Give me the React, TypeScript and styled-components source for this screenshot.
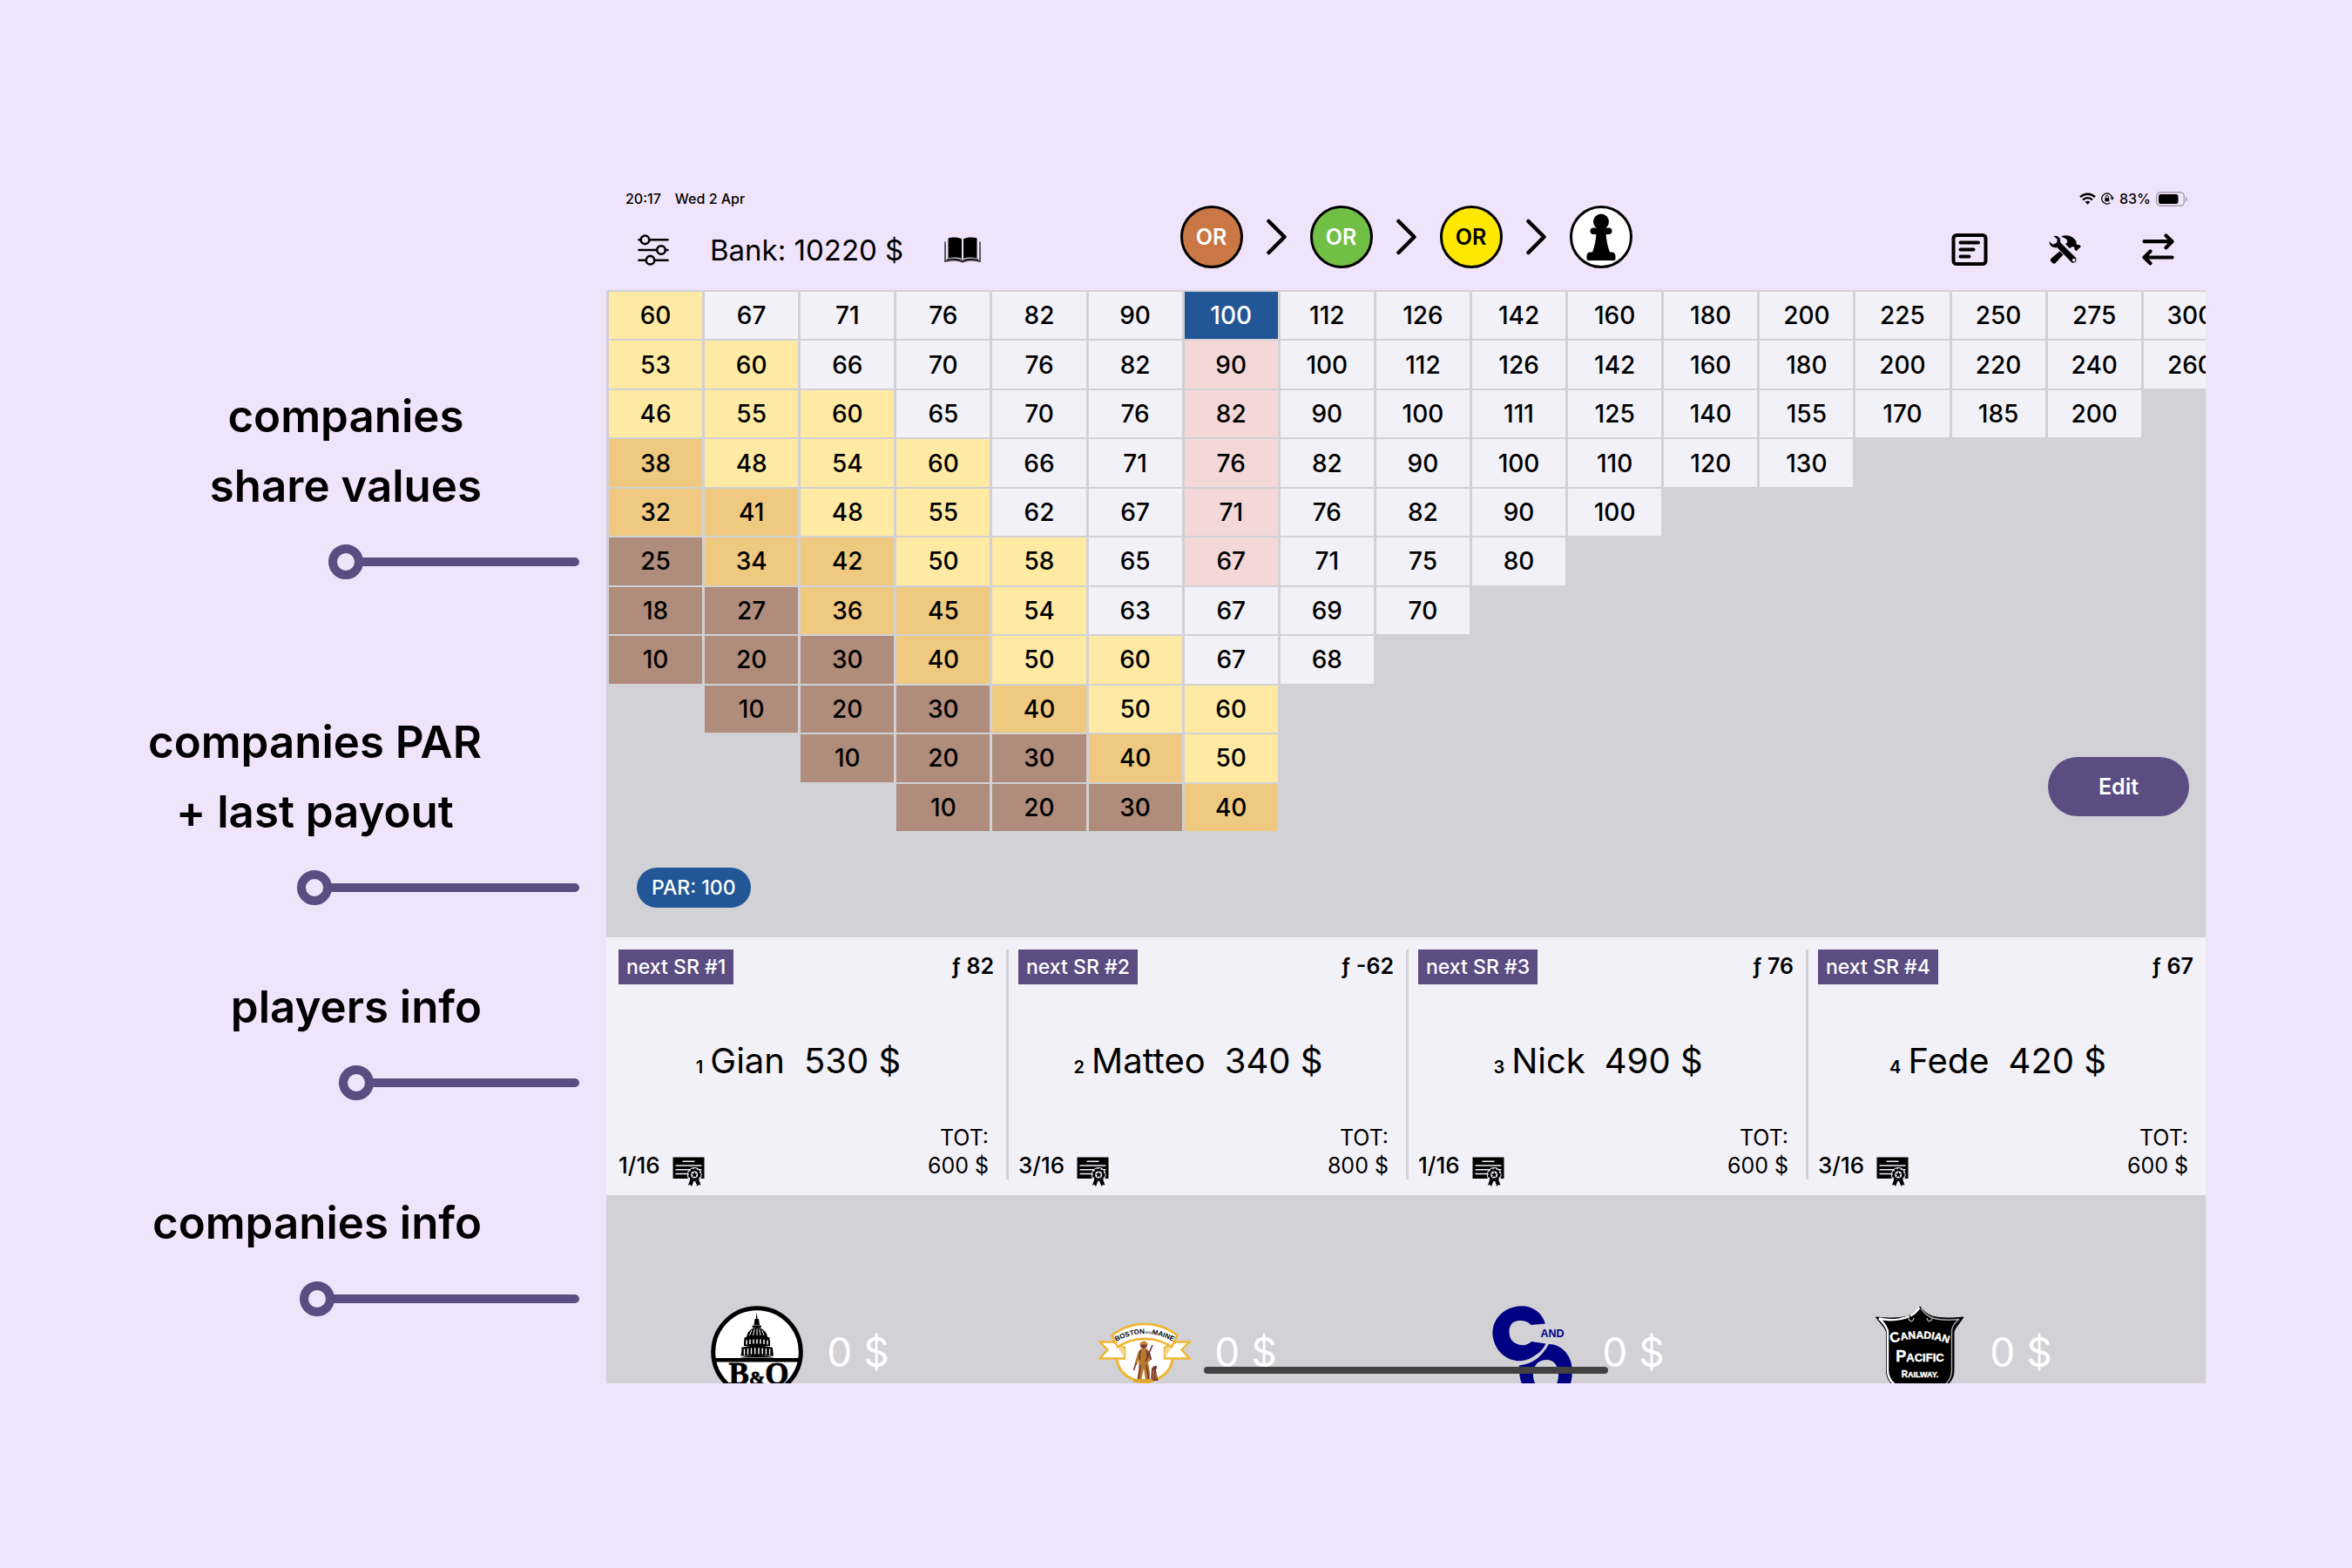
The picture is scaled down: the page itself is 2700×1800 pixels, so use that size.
import React from "react";
import styled, { createGlobalStyle } from "styled-components";

const color = {
  page: "#f0e4fb",
  board: "#d1d1d6",
  surface: "#f2f1f7",
  accent: "#5b4d82",
  par: "#225696",
  ink: "#000000",
};

const zoneFill = {
  w: color.surface,
  y: "#ffeaa4",
  o: "#eec97f",
  b: "#af8c7b",
  p: "#f4d8d8",
  s: color.par,
};

type Zone = keyof typeof zoneFill;

const GlobalStyle = createGlobalStyle`
  *, *::before, *::after { box-sizing: border-box; }
  body {
    margin: 0;
    background: ${color.page};
    color: ${color.ink};
    font-family: Inter, "Liberation Sans", sans-serif;
  }
  svg { display: block; flex: none; }
`;

const Poster = styled.main`
  display: grid;
  grid-template-columns: 665px minmax(0, 1fr);
  column-gap: 31px;
  height: 100vh;
  padding: 211px 168px 212px 0;
`;

/* ---------- annotations ---------- */

const Notes = styled.aside`
  display: flex;
  flex-direction: column;
  align-items: flex-end;
  padding-top: 227px;
`;

const Note = styled.div<{ $gap: number }>`
  display: flex;
  flex-direction: column;
  margin-bottom: ${(p) => p.$gap}px;
`;

const NoteText = styled.h2`
  margin: 0 112px 27px 0;
  font-size: 51px;
  line-height: 80px;
  font-weight: 600;
  text-align: center;
  white-space: pre-line;
`;

const Connector = styled.div`
  display: flex;
  align-items: center;
  margin-left: calc(50% - 76px);
`;

const Ring = styled.span`
  width: 40px;
  height: 40px;
  border: 10px solid ${color.accent};
  border-radius: 50%;
`;

const Line = styled.span`
  flex: 1;
  height: 10px;
  margin-left: -2px;
  border-radius: 0 5px 5px 0;
  background: ${color.accent};
`;

/* ---------- tablet screen ---------- */

const Screen = styled.section`
  position: relative;
  display: flex;
  flex-direction: column;
  min-width: 0;
  overflow: hidden;
`;

const Header = styled.header`
  display: grid;
  flex: none;
  grid-template-columns: 1fr auto 1fr;
  grid-template-rows: 29px 93px;
  align-items: center;
`;

const Status = styled.div<{ $end?: boolean }>`
  grid-row: 1;
  grid-column: ${(p) => (p.$end ? 3 : 1)};
  display: flex;
  align-items: center;
  justify-content: ${(p) => (p.$end ? "flex-end" : "flex-start")};
  gap: ${(p) => (p.$end ? 6 : 16)}px;
  padding: ${(p) => (p.$end ? "5px 20px 0 0" : "5px 0 0 22px")};
  font-size: 16px;
  line-height: 20px;
  font-weight: 500;
`;

const Tools = styled.div<{ $end?: boolean }>`
  grid-row: 2;
  grid-column: ${(p) => (p.$end ? 3 : 1)};
  display: flex;
  align-items: center;
  justify-content: ${(p) => (p.$end ? "flex-end" : "flex-start")};
  gap: ${(p) => (p.$end ? 70 : 47)}px;
  padding: ${(p) => (p.$end ? "0 36px 0 0" : "0 0 0 36px")};
`;

const IconButton = styled.button`
  display: flex;
  padding: 0;
  border: 0;
  background: none;
  color: inherit;
  cursor: pointer;
`;

const Bank = styled.span`
  font-size: 33px;
  line-height: 40px;
`;

const Rounds = styled.ol`
  grid-row: 1 / 3;
  grid-column: 2;
  display: flex;
  align-items: center;
  gap: 27px;
  margin: 0;
  padding: 0;
  list-style: none;
`;

const Round = styled.li`
  display: flex;
  align-items: center;
  gap: 27px;
`;

const Token = styled.span<{ $fill: string; $ink: string }>`
  display: flex;
  align-items: center;
  justify-content: center;
  width: 72px;
  height: 72px;
  border: 3px solid ${color.ink};
  border-radius: 50%;
  background: ${(p) => p.$fill};
  color: ${(p) => p.$ink};
  font-size: 25px;
  font-weight: 600;
`;

/* ---------- share value board ---------- */

const Board = styled.div`
  position: relative;
  flex: none;
  padding-bottom: 34px;
  background: ${color.board};
  overflow: hidden;
`;

const Market = styled.table`
  width: 1875px;
  height: 623px;
  table-layout: fixed;
  border-spacing: 3px 2px;
`;

const Value = styled.td<{ $zone: Zone }>`
  padding: 0;
  background: ${(p) => zoneFill[p.$zone]};
  color: ${(p) => (p.$zone === "s" ? "#ffffff" : color.ink)};
  font-size: 28px;
  line-height: 34px;
  font-weight: 500;
  text-align: center;
`;

const Blank = styled.td`
  padding: 0;
`;

const ParRow = styled.div`
  display: flex;
  padding: 40px 35px 0;
`;

const ParPill = styled.span`
  padding: 8px 17px;
  border-radius: 23px;
  background: ${color.par};
  color: #ffffff;
  font-size: 23px;
  line-height: 30px;
  font-weight: 500;
`;

const EditButton = styled.button`
  position: absolute;
  right: 19px;
  bottom: 139px;
  width: 162px;
  height: 68px;
  border: 0;
  border-radius: 34px;
  background: ${color.accent};
  color: #ffffff;
  font: 600 25px/30px Inter, "Liberation Sans", sans-serif;
  cursor: pointer;
`;

/* ---------- players ---------- */

const Players = styled.div`
  display: flex;
  flex: none;
  gap: 11px;
  padding: 14px 0 18px 14px;
  background: ${color.surface};
`;

const Player = styled.article`
  display: flex;
  flex: 1;
  flex-direction: column;
  justify-content: space-between;
  height: 264px;
  padding-right: 14px;
  border-right: 3px solid ${color.board};

  &:last-child {
    border-right: 0;
  }
`;

const PlayerRow = styled.div`
  display: flex;
  align-items: flex-start;
  justify-content: space-between;
`;

const Tag = styled.span`
  padding: 5px 9px;
  background: ${color.accent};
  color: #ffffff;
  font-size: 23px;
  line-height: 30px;
  font-weight: 500;
`;

const Flow = styled.span`
  padding-top: 4px;
  font-size: 25px;
  line-height: 30px;
  font-weight: 600;
`;

const Person = styled.div`
  display: flex;
  align-items: baseline;
  justify-content: center;
  padding: 22px 18px 0 0;
  font-size: 40px;
  line-height: 48px;
`;

const Seat = styled.span`
  margin-right: 8px;
  font-size: 20px;
  font-weight: 600;
`;

const Cash = styled.span`
  margin-left: 22px;
`;

const Certs = styled.span`
  display: flex;
  align-self: flex-end;
  align-items: center;
  gap: 14px;
  height: 32px;
  font-size: 26px;
  line-height: 32px;
  font-weight: 500;

  svg {
    margin-bottom: -14px;
  }
`;

const Total = styled.span`
  padding-right: 6px;
  font-size: 25px;
  line-height: 32px;
  text-align: right;
  white-space: pre-line;
`;

/* ---------- companies ---------- */

const Companies = styled.div`
  display: grid;
  flex: 1;
  grid-template-columns: repeat(4, 1fr);
  align-items: start;
  min-height: 0;
  padding: 127px 56px 0 0;
  background: ${color.board};
  overflow: hidden;
`;

const Company = styled.div`
  display: flex;
  align-items: center;
  justify-content: center;
  gap: 27px;
  color: #ffffff;
  font-size: 46px;
  line-height: 56px;
`;

const HomeBar = styled.div`
  position: absolute;
  left: 50%;
  bottom: 11px;
  width: 464px;
  height: 8px;
  margin-left: -232px;
  border-radius: 4px;
  background: #424242;
`;

/* ---------- icons ---------- */

const SlidersIcon = () => (
  <svg width="36" height="36" viewBox="0 0 36 36" fill="none" stroke="currentColor" strokeWidth="2.6" strokeLinecap="round">
    <path d="M1.5 6.3H3.6M13.5 6.3H34.5M1.5 18H22M32 18H34.5M1.5 29.7H9.5M19.5 29.7H34.5" />
    <circle cx="8.5" cy="6.3" r="4.8" />
    <circle cx="27" cy="18" r="4.8" />
    <circle cx="14.5" cy="29.7" r="4.8" />
  </svg>
);

const BookIcon = () => (
  <svg width="42" height="30" viewBox="0 0 42 30">
    <path d="M4.5 1.6C9 .2 15.5 .1 20 2.2V25C15.5 23.2 9 23.2 4.5 24.4ZM22 2.2C26.5 .1 33 .2 37.5 1.6V24.4C33 23.2 26.5 23.2 22 25Z" fill="currentColor" />
    <path d="M1 5.5V28.3C7.500 26.3 15 26 21 28.8C27 26 34.5 26.3 41 28.3V5.5M2.5 26.2C9 24.6 15.5 24.7 21 27C26.5 24.7 33 24.6 39.5 26.2" fill="none" stroke="currentColor" strokeWidth="1.2" />
  </svg>
);

const Chevron = () => (
  <svg width="23" height="42" viewBox="0 0 23 42" fill="none" stroke="currentColor" strokeWidth="4.5" strokeLinecap="round" strokeLinejoin="round">
    <path d="M2.5 3 20.5 21 2.5 39" />
  </svg>
);

const PawnIcon = () => (
  <svg width="34" height="54" viewBox="0 0 34 54" fill="currentColor">
    <circle cx="17" cy="9.5" r="9" />
    <rect x="4.5" y="16.5" width="25" height="7.5" rx="3.7" />
    <path d="M11.5 23H22.5C23 31 24.5 38 27 44.5H29.5C32 44.5 33.5 46.5 33.5 49V52Q33.5 54 31.5 54H2.5Q.5 54 .5 52V49C.5 46.5 2 44.5 4.5 44.5H7C9.5 38 11 31 11.5 23Z" />
  </svg>
);

const WifiIcon = () => (
  <svg width="19" height="14" viewBox="0 0 19 14" fill="none" stroke="currentColor" strokeWidth="2.4">
    <path d="M1 5.2C5.8 .6 13.2 .6 18 5.2M4 8.4C7.2 5.4 11.8 5.4 15 8.4" />
    <path d="M6.6 10.8C8.3 9.3 10.7 9.3 12.4 10.8L9.5 13.7Z" fill="currentColor" stroke="none" />
  </svg>
);

const LockIcon = () => (
  <svg width="15" height="14" viewBox="0 0 15 14" fill="none" stroke="currentColor" strokeWidth="1.3">
    <path d="M12.7 6.2A6 6 0 1 0 10.5 11.7" />
    <path d="M10.5 5.8H15L12.7 8.800Z" fill="currentColor" stroke="none" />
    <rect x="4.3" y="6.2" width="5" height="4" rx=".6" fill="currentColor" stroke="none" />
    <path d="M5.3 6.2V5A1.5 1.5 0 0 1 8.3 5V6.2" strokeWidth="1" />
  </svg>
);

const BatteryIcon = () => (
  <svg width="37" height="17" viewBox="0 0 37 17">
    <rect x=".7" y=".7" width="31.6" height="15.6" rx="4.5" fill="none" stroke="#a49bac" strokeWidth="1.4" />
    <rect x="3" y="3" width="22.5" height="11" rx="2.5" fill="currentColor" />
    <path d="M34 5.5C36.3 6.3 36.3 10.7 34 11.5Z" fill="#a49bac" />
  </svg>
);

const ListIcon = () => (
  <svg width="42" height="37" viewBox="0 0 42 37" fill="none" stroke="currentColor" strokeWidth="4" strokeLinecap="round">
    <rect x="2.5" y="2" width="37" height="33" rx="3.5" />
    <path d="M10.5 10.5H31M10.5 18.5H25.5M10.5 26.5H20.5" />
  </svg>
);

const HammerWrenchIcon = () => (
  <svg width="37" height="33" viewBox="0 0 37 33" fill="currentColor">
    <path d="M14.7 .9C20 -.3 25.5 0 29.5 4.4L31.7 7.3C31 9 31.6 10.6 33.2 11.3L34.6 10.8L36.9 13L31.4 18.3L29.2 16.1L29.6 14.5C28.6 13.3 27.4 13 26.2 13.5L24.2 15.3L19 10.2L21.2 8.2C21.7 5.2 19 3 14.7 2.3Z" />
    <path d="M12.5 18.2 16.6 22.2 7.8 31.7C6.6 33 5.3 33 4 31.7L2.6 30.3C1.5 29 1.5 28 2.6 26.8Z" />
    <path
      d="M4.800 .9C10 -1 14.500 3 13.300 8L31.2 25.8C33.4 28.6 30.2 33.5 26.3 31.7L9.300 14.200C4.700 15.500 -.4 12 .3 6.800L4.600 10.300L8.900 8.600L9.300 4.500ZM28.7 27A1.6 1.6 0 1 0 28.7 30.2A1.6 1.6 0 1 0 28.7 27Z"
      fillRule="evenodd"
      stroke={color.page}
      strokeWidth=".7"
    />
  </svg>
);

const SwapIcon = () => (
  <svg width="37" height="37" viewBox="0 0 37 37" fill="none" stroke="currentColor" strokeWidth="4.2" strokeLinecap="round" strokeLinejoin="round">
    <path d="M2.5 9.2H34M27.5 2.5 34.5 9.2 27.5 16.2M34.5 27.5H3M9.5 20.5 2.5 27.5 9.5 34.3" />
  </svg>
);

const CertificateIcon = () => (
  <svg width="37" height="34" viewBox="0 0 37 34">
    <path d="M.5 .5H36.5V25H.5Z" fill="currentColor" />
    <path d="M11.5 5.2H25.5M3.5 10H33.5M3.5 14.8H33.5M3.5 19.5H17" stroke={color.surface} strokeWidth="1.5" />
    <circle cx="25.2" cy="20.5" r="8.4" fill={color.surface} />
    <path d="M20.5 25.5 18 32.5 20.5 32 22 34 24.5 27.5ZM30 25.5 32.5 32.5 30 32 28.5 34 26 27.5Z" fill="currentColor" />
    <circle cx="25.2" cy="20.5" r="6.4" fill="currentColor" stroke="currentColor" strokeWidth="2" strokeDasharray="2.8 1.35" />
    <circle cx="25.2" cy="20.5" r="4" fill={color.surface} />
    <path d="M25.2 16.8 26.2 19.3 28.8 19.4 26.8 21.1 27.5 23.7 25.2 22.2 22.9 23.7 23.6 21.1 21.6 19.4 24.2 19.3Z" fill="currentColor" />
  </svg>
);

/* ---------- company logos ---------- */

const BaltimoreLogo = () => (
  <svg width="106" height="106" viewBox="0 0 106 106" role="img" aria-label="B&O">
    <circle cx="53" cy="53" r="50.3" fill="#fff" stroke="#000" strokeWidth="5" />
    <path d="M4 60H102V64.5H4Z" />
    <path d="M52.6 7 53.5 15H51.8ZM50.5 15H55L56 22H49.5ZM48 22.5H57.5L58 25H47.5Z" />
    <path d="M41 36C42 29 47 25 52.8 25S64 29 65 36Z" />
    <path d="M44.5 34 47 28M48.6 34 50 27M53 34V26.5M57 34 55.8 27M61 34 58.8 28" stroke="#fff" strokeWidth="1" />
    <path d="M38.5 36.5C46 33.5 60 33.5 67.5 36.5V39.5H38.5ZM38 39.5H68V46H38Z" />
    <path d="M41 39.5V44.5M45 38.8V44M49 38.5V43.5M53 38.5V43.5M57 38.5V43.5M61 38.8V44M65 39.5V44.5" stroke="#fff" strokeWidth="1.5" />
    <path d="M35 48C45 44.5 61 44.5 71 48V50L72 57.5H34.5L35.5 50Z" />
    <path d="M38.5 49.5V56.5M42.5 49V56M46.5 48.5V55.5M50.7 48.3V55.5M55 48.3V55.5M59.2 48.5V55.5M63.4 49V56M67.6 49.5V56.5" stroke="#fff" strokeWidth="1.4" />
    <path d="M33.5 59.5C45 56 61 56 73 59.5Z" />
    <text x="55" y="90" textAnchor="middle" fontFamily="Liberation Serif, serif" fontWeight="700" fontSize="35" stroke="#000" strokeWidth=".8">
      B<tspan fontSize="22">&amp;</tspan>O
    </text>
  </svg>
);

const BostonLogo = () => (
  <svg width="106" height="106" viewBox="0 0 106 106" role="img" aria-label="Boston and Maine">
    <path d="M20.5 50C19 72 29 84 53 88.500C77 84 87 72 85.5 50V38H20.5Z" fill="#fff" stroke="#efb52f" strokeWidth="3" />
    <path d="M17 41.5H1.5L10.5 50.5L1.5 60.5H30V48ZM89 41.5H104.5L95.5 50.5L104.5 60.5H76V48Z" fill="#fff" stroke="#efb52f" strokeWidth="2.4" />
    <path d="M23 45 30 50V60L22 48ZM83 45 76 50V60L84 48Z" fill="#f3d592" />
    <path d="M15.5 34C38 16.5 68 16.5 90.5 34L84 47C63 34.5 43 34.5 22 47Z" fill="#fff" stroke="#efb52f" strokeWidth="2.6" />
    <defs>
      <path id="boston-arc" d="M18 42.500C41 28.500 65 28.500 88 42.500" />
    </defs>
    <text fontFamily="Liberation Sans, sans-serif" fontWeight="700" fontSize="8">
      <textPath href="#boston-arc" startOffset="50%" textAnchor="middle">
        BOSTON<tspan fontSize="5" fontStyle="italic" fontWeight="400">and</tspan>MAINE
      </textPath>
    </text>
    <circle cx="52" cy="45" r="4" fill="#7a3a38" />
    <path d="M47 44.500C48 40.500 56 40.500 57.500 44.500Z" fill="#c98c2c" />
    <path d="M49 49H55L59 53L60 62L57 65L59 76V86H54L52 72L49 86H44L46.500 72L46 62L44 68L41.500 67L45.500 53Z" fill="#b57a2b" />
    <path d="M62 45 54 64M48 51 47 62M55 51 57 60M48 68 46 84M55 68 57.500 84M43 66 40.500 74M58 53 60.500 62" fill="none" stroke="#6f3038" strokeWidth="1.600" />
    <path d="M61 72C65 67 69 68 66 74L68.500 86H60Z" fill="#7a3a38" />
    <path d="M63 74V84M66 77V84" stroke="#c98c2c" strokeWidth="1" />
    <path d="M40 84H62V88H40Z" fill="#dca631" />
  </svg>
);

const ChesapeakeLogo = () => (
  <svg width="106" height="106" viewBox="0 0 106 106" role="img" aria-label="C and O">
    <path d="M68 20.5C63 4 47 -3 32 1.5C13 6 4 24 8.5 39C14 60 36 69 52 59.5C60 55 66 50 68.5 43.5L52 41C46 48 31 46 27.5 36C24 24 30 17 38 17C44 17 48 18 51.5 22Z" fill="#000082" />
    <path d="M72 44C86 44 97 56 98.5 70C100 87 96 106 70 106C46 106 37 91 38 68.500C54 67 64 58 72 44ZM70 62C58 62 54 70 54 79C54 92 62 96 70 96C80 96 83 88 83 79C83 70 79 62 70 62Z" fill="#000082" fillRule="evenodd" />
    <text x="76" y="36" textAnchor="middle" fontFamily="Liberation Sans, sans-serif" fontWeight="700" fontSize="12.5" fill="#000082">
      AND
    </text>
  </svg>
);

const CanadianLogo = () => (
  <svg width="106" height="106" viewBox="0 0 106 106" role="img" aria-label="Canadian Pacific Railway">
    <path d="M53 .8C57 6 61 9.5 67 12C78 14.5 90 14.5 103 13C98 21 94 24 92 30V74C92 92 75 97 53 105C31 97 14.5 92 14.5 74V30C12.5 24 8 21 2.5 13C16 14.5 28 14.5 39 12C45 9.5 49 6 53 .8Z" stroke="#000" />
    <path d="M6 14.5C18 17.5 31 16 41 12M52.5 2C49 7 46 9.5 42 11.5M6 14.500C11 19 14.500 24 16 29V74C16 84 22 90 30 94" fill="none" stroke="#fff" strokeWidth="2.400" />
    <path d="M54 3C58 8 61 11 65 13C76 17 89 16.5 98 15.5C93 19 90 24 89.500 29V74C89.500 84 84 90 76 94M40 13C40 18 45 20 46 14M67 13C67 18 62 20 61 14" fill="none" stroke="#aaa" strokeWidth="1.4" />
    <defs>
      <path id="canadian-arc" d="M15 45C40 35 66 35 91 45" />
    </defs>
    <g fill="#fff" stroke="#fff" strokeWidth=".4" fontFamily="Liberation Sans, sans-serif" fontWeight="700">
      <text fontSize="12">
        <textPath href="#canadian-arc" startOffset="50%" textAnchor="middle">
          <tspan fontSize="16">C</tspan>ANADIAN
        </textPath>
      </text>
      <text x="53" y="64" textAnchor="middle" fontSize="13">
        <tspan fontSize="18">P</tspan>ACIFIC
      </text>
      <text x="53" y="82" textAnchor="middle" fontSize="9">
        <tspan fontSize="10">R</tspan>AILWAY.
      </text>
    </g>
  </svg>
);

/* ---------- data ---------- */

const notes = [
  { text: "companies\nshare values", gap: 147 },
  { text: "companies PAR\n+ last payout", gap: 77 },
  { text: "players info", gap: 101 },
  { text: "companies info", gap: 0 },
];

const COLUMNS = 17;

// Each row: how many blank cells precede it, the zone of each cell, the values.
const market: { skip: number; zones: string; values: number[] }[] = [
  { skip: 0, zones: "ywwwwwswwwwwwwwww", values: [60, 67, 71, 76, 82, 90, 100, 112, 126, 142, 160, 180, 200, 225, 250, 275, 300] },
  { skip: 0, zones: "yywwwwpwwwwwwwwww", values: [53, 60, 66, 70, 76, 82, 90, 100, 112, 126, 142, 160, 180, 200, 220, 240, 260] },
  { skip: 0, zones: "yyywwwpwwwwwwwww", values: [46, 55, 60, 65, 70, 76, 82, 90, 100, 111, 125, 140, 155, 170, 185, 200] },
  { skip: 0, zones: "oyyywwpwwwwww", values: [38, 48, 54, 60, 66, 71, 76, 82, 90, 100, 110, 120, 130] },
  { skip: 0, zones: "ooyywwpwwww", values: [32, 41, 48, 55, 62, 67, 71, 76, 82, 90, 100] },
  { skip: 0, zones: "booyywpwww", values: [25, 34, 42, 50, 58, 65, 67, 71, 75, 80] },
  { skip: 0, zones: "bbooywwww", values: [18, 27, 36, 45, 54, 63, 67, 69, 70] },
  { skip: 0, zones: "bbboyyww", values: [10, 20, 30, 40, 50, 60, 67, 68] },
  { skip: 1, zones: "bbboyy", values: [10, 20, 30, 40, 50, 60] },
  { skip: 2, zones: "bbboy", values: [10, 20, 30, 40, 50] },
  { skip: 3, zones: "bbbo", values: [10, 20, 30, 40] },
];

const players = [
  { name: "Gian", cash: 530, flow: 82, certs: 1, total: 600 },
  { name: "Matteo", cash: 340, flow: -62, certs: 3, total: 800 },
  { name: "Nick", cash: 490, flow: 76, certs: 1, total: 600 },
  { name: "Fede", cash: 420, flow: 67, certs: 3, total: 600 },
];

const rounds = [
  { fill: "#c87745", ink: "#ffffff", label: "OR" },
  { fill: "#72bf45", ink: "#ffffff", label: "OR" },
  { fill: "#ffe800", ink: "#000000", label: "OR" },
  { fill: "#ffffff", ink: "#000000", label: null },
];

const companies = [BaltimoreLogo, BostonLogo, ChesapeakeLogo, CanadianLogo];

export default function App() {
  return (
    <>
      <GlobalStyle />
      <Poster>
        <Notes>
          {notes.map((note) => (
            <Note key={note.text} $gap={note.gap}>
              <NoteText>{note.text}</NoteText>
              <Connector>
                <Ring />
                <Line />
              </Connector>
            </Note>
          ))}
        </Notes>

        <Screen>
          <Header>
            <Status>
              <span>20:17</span>
              <span>Wed 2 Apr</span>
            </Status>
            <Status $end>
              <WifiIcon />
              <LockIcon />
              <span>83%</span>
              <BatteryIcon />
            </Status>
            <Tools>
              <IconButton aria-label="Settings"><SlidersIcon /></IconButton>
              <Bank>Bank: 10220 $</Bank>
              <IconButton aria-label="Rules"><BookIcon /></IconButton>
            </Tools>
            <Rounds>
              {rounds.map((round, i) => (
                <Round key={i}>
                  {i > 0 && <Chevron />}
                  <Token $fill={round.fill} $ink={round.ink}>
                    {round.label ?? <PawnIcon />}
                  </Token>
                </Round>
              ))}
            </Rounds>
            <Tools $end>
              <IconButton aria-label="Log"><ListIcon /></IconButton>
              <IconButton aria-label="Tools"><HammerWrenchIcon /></IconButton>
              <IconButton aria-label="Swap"><SwapIcon /></IconButton>
            </Tools>
          </Header>

          <Board>
            <Market>
              <tbody>
                {market.map((row, r) => {
                  const rest = COLUMNS - row.skip - row.values.length;
                  return (
                    <tr key={r}>
                      {row.skip > 0 && <Blank colSpan={row.skip} />}
                      {row.values.map((value, c) => (
                        <Value key={c} $zone={row.zones[c] as Zone}>{value}</Value>
                      ))}
                      {rest > 0 && <Blank colSpan={rest} />}
                    </tr>
                  );
                })}
              </tbody>
            </Market>
            <ParRow>
              <ParPill>PAR: 100</ParPill>
            </ParRow>
            <EditButton>Edit</EditButton>
          </Board>

          <Players>
            {players.map((player, i) => (
              <Player key={player.name}>
                <PlayerRow>
                  <Tag>next SR #{i + 1}</Tag>
                  <Flow>ƒ {player.flow}</Flow>
                </PlayerRow>
                <Person>
                  <Seat>{i + 1}</Seat>
                  {player.name}
                  <Cash>{player.cash} $</Cash>
                </Person>
                <PlayerRow>
                  <Certs>
                    {player.certs}/16
                    <CertificateIcon />
                  </Certs>
                  <Total>{`TOT:\n${player.total} $`}</Total>
                </PlayerRow>
              </Player>
            ))}
          </Players>

          <Companies>
            {companies.map((Logo, i) => (
              <Company key={i}>
                <Logo />
                <span>0 $</span>
              </Company>
            ))}
          </Companies>
          <HomeBar />
        </Screen>
      </Poster>
    </>
  );
}
